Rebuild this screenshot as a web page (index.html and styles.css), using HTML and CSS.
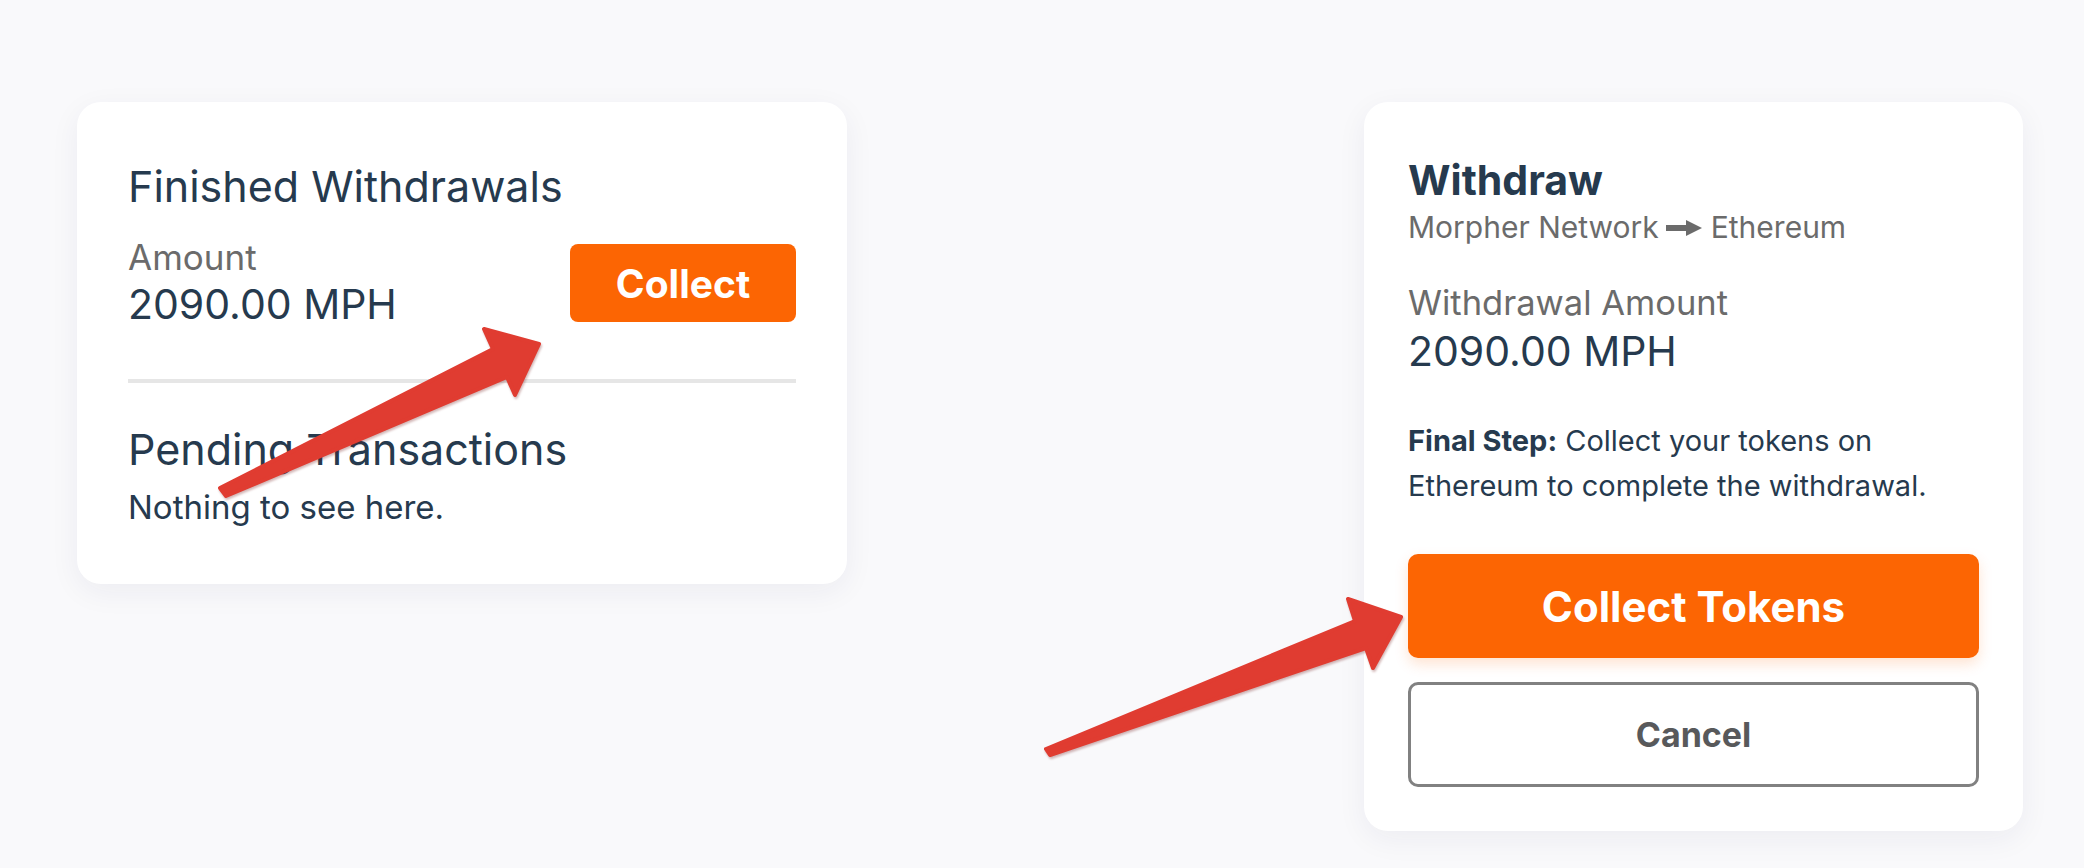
FILE: index.html
```html
<!DOCTYPE html>
<html lang="en">
<head>
<meta charset="utf-8">
<title>Withdrawals</title>
<link rel="stylesheet" href="styles.css">
</head>
<body>
<main class="page">
  <section class="card card-left">
    <h2 class="section-title">Finished Withdrawals</h2>
    <div class="withdrawal-row">
      <div class="amount-block">
        <div class="label">Amount</div>
        <div class="amount">2090.00 MPH</div>
      </div>
      <button class="btn btn-collect">Collect</button>
    </div>
    <hr class="divider">
    <h2 class="section-title pending">Pending Transactions</h2>
    <p class="empty">Nothing to see here.</p>
  </section>

  <section class="card card-right">
    <h1 class="withdraw-title">Withdraw</h1>
    <div class="route">Morpher Network<svg class="route-arrow" viewBox="0 0 36 18" width="36" height="18"><rect x="0" y="6" width="22" height="6" fill="#6b6b6b"/><polygon points="20,1 36,9 20,17" fill="#6b6b6b"/></svg>Ethereum</div>
    <div class="label label-right">Withdrawal Amount</div>
    <div class="amount amount-right">2090.00 MPH</div>
    <p class="final-step"><strong>Final Step:</strong> Collect your tokens on Ethereum to complete the withdrawal.</p>
    <div class="actions">
      <button class="btn btn-primary">Collect Tokens</button>
      <button class="btn btn-cancel">Cancel</button>
    </div>
  </section>
</main>

<svg class="annotations" width="2084" height="868" viewBox="0 0 2084 868">
  <g class="anno-arrow">
    <polygon points="220,488 493,349 484,329 539,344 515,395 507,377 226,496"/>
    <polygon points="1046,749 1355,621 1348,599 1401,617 1373,668 1366,648 1050,755"/>
  </g>
</svg>
</body>
</html>
```

FILE: styles.css
```css
* { box-sizing: border-box; }

html, body {
  margin: 0;
  padding: 0;
  background: #f9f9fb;
}

body {
  font-family: Inter, Roboto, "Liberation Sans", Arial, sans-serif;
  color: #263a4e;
  width: 2084px;
  height: 868px;
  overflow: hidden;
  position: relative;
}

.page {
  display: flex;
  justify-content: space-between;
  align-items: flex-start;
  padding: 102px 61px 0 77px;
}

.card {
  background: #ffffff;
  border-radius: 24px;
  box-shadow: 0 8px 30px rgba(30, 40, 90, 0.06);
}

.card-left {
  width: 770px;
  padding: 60px 51px 57px 51px;
}

.card-right {
  width: 659px;
  padding: 54px 44px 44px 44px;
}

.section-title {
  margin: 0;
  font-size: 43px;
  line-height: 48px;
  font-weight: 400;
  color: #263a4e;
}

.withdrawal-row {
  display: flex;
  justify-content: space-between;
  align-items: center;
  margin-top: 27px;
}

.label {
  font-size: 35px;
  line-height: 40px;
  color: #6b6b6b;
}

.amount {
  margin-top: 2px;
  font-size: 41px;
  line-height: 50px;
  color: #263a4e;
}

.btn {
  font-family: Inter, Roboto, "Liberation Sans", Arial, sans-serif;
  font-weight: 700;
  cursor: pointer;
  border: none;
  display: flex;
  align-items: center;
  justify-content: center;
}

.btn-collect {
  width: 226px;
  height: 78px;
  border-radius: 8px;
  background: #fc6503;
  color: #ffffff;
  font-size: 39px;
}

.divider {
  margin: 50px 0 0 0;
  border: none;
  height: 4px;
  background: #e6e6e6;
}

.pending {
  margin-top: 42px;
}

.empty {
  margin: 14px 0 0 0;
  font-size: 33px;
  line-height: 40px;
  color: #263a4e;
}

.withdraw-title {
  margin: 0;
  font-size: 41px;
  line-height: 48px;
  font-weight: 700;
  color: #263a4e;
}

.route {
  margin-top: 5px;
  font-size: 30px;
  line-height: 36px;
  color: #6b6b6b;
  display: flex;
  align-items: center;
}

.route-arrow {
  margin: 2px 9px 0 7px;
}

.label-right {
  margin-top: 38px;
  font-size: 34.5px;
}

.amount-right {
  margin-top: 3px;
}

.final-step {
  margin: 42px 0 0 0;
  max-width: 540px;
  font-size: 29px;
  line-height: 45px;
  color: #263a4e;
}

.final-step strong {
  font-weight: 700;
}

.actions {
  margin-top: 46px;
  display: flex;
  flex-direction: column;
  gap: 24px;
}

.btn-primary {
  width: 100%;
  height: 104px;
  border-radius: 10px;
  background: #fc6503;
  color: #ffffff;
  font-size: 42px;
  box-shadow: 0 6px 14px rgba(252, 101, 3, 0.18);
}

.btn-cancel {
  width: 100%;
  height: 105px;
  border-radius: 10px;
  background: #ffffff;
  border: 3px solid #818181;
  color: #58595b;
  font-size: 34px;
}

.annotations {
  position: absolute;
  left: 0;
  top: 0;
  pointer-events: none;
}

.anno-arrow polygon {
  fill: #e03c31;
  stroke: #e03c31;
  stroke-width: 4;
  stroke-linejoin: round;
  filter: drop-shadow(1px 2px 1px rgba(110, 20, 20, 0.3));
}
```
